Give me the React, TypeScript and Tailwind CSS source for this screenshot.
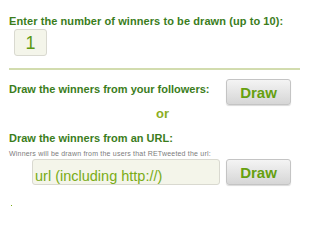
import React from "react";

const font = { fontFamily: '"Liberation Sans", Arial, sans-serif' };

function DrawButton() {
  return (
    <button className="w-[65px] h-[26px] rounded-[3px] border border-[#c4c4c4] bg-gradient-to-b from-[#f4f4f4] to-[#d6d6d6] text-[15px] font-bold leading-none text-[#66a010] shadow-[0_1px_1px_rgba(0,0,0,0.15)]">
      Draw
    </button>
  );
}

export default function App() {
  return (
    <div className="w-[300px] h-[207px] overflow-hidden bg-white" style={font}>
      <div className="pl-[9px] pt-[16px]">
        {/* number of winners */}
        <p className="text-[11px] font-bold leading-[11px] tracking-[0.08px] text-[#3b7d1c] whitespace-nowrap">
          Enter the number of winners to be drawn (up to 10):
        </p>
        <div className="ml-[5px] mt-[2px] flex h-[27px] w-[33px] items-center justify-center rounded-[3px] border border-[#d9d9d0] bg-[#f4f5ea] text-[18px] leading-none text-[#5c9a12]">
          1
        </div>
        <div className="mt-[12px] h-[2px] bg-[#d2dcae]" />

        {/* followers */}
        <div className="mt-[9px] flex items-start">
          <p className="mt-[5px] w-[217px] text-[11px] font-bold leading-[11px] text-[#3b7d1c] whitespace-nowrap">
            Draw the winners from your followers:
          </p>
          <DrawButton />
        </div>

        <p className="ml-[147px] mt-[2px] text-[13px] font-bold leading-[14px] text-[#8cae1e]">or</p>

        {/* url */}
        <p className="mt-[12px] text-[11px] font-bold leading-[11px] text-[#3b7d1c] whitespace-nowrap">
          Draw the winners from an URL:
        </p>
        <p className="mt-[6px] text-[7px] leading-[8px] tracking-[0.2px] text-[#7c7c7c] whitespace-nowrap">
          Winners will be drawn from the users that RETweeted the url:
        </p>
        <div className="mt-[1px] flex items-center gap-[6px]">
          <div className="ml-[23px] flex h-[26px] w-[188px] items-end rounded-[3px] border border-[#d9d9d0] bg-[#f4f5ea] px-[2px] pb-[1px]">
            <span className="text-[14.5px] leading-none text-[#7aac16] whitespace-nowrap">url (including http://)</span>
          </div>
          <DrawButton />
        </div>

        <div className="ml-[2px] mt-[20px] h-[1px] w-[1px] bg-[#7aac16]" />
      </div>
    </div>
  );
}
